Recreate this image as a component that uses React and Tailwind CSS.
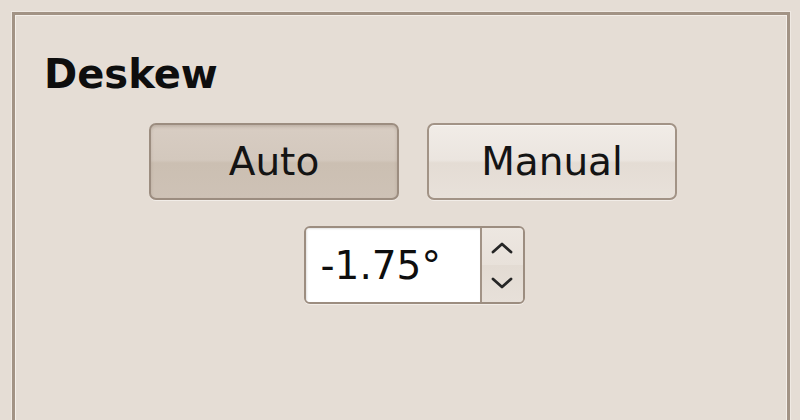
import React from "react"

function Chevron({ up }) {
 return (
  <svg width="22" height="14" viewBox="0 0 22 14" className="block">
   <polyline
    points={up ? "2,11 11,3 20,11" : "2,3 11,11 20,3"}
    fill="none"
    stroke="#262626"
    strokeWidth="2.8"
    strokeLinecap="round"
    strokeLinejoin="round"
   />
  </svg>
 )
}

function App() {
 return (
  <div
   className="w-[800px] h-[420px] bg-[#e5ddd5] overflow-hidden pt-[12px] pl-[12px] pr-[10px]"
   style={{ fontFamily: '"DejaVu Sans", Verdana, sans-serif' }}
  >
   <div className="h-[420px] border-[3px] border-b-0 border-[#a29385] shadow-[inset_1px_1px_0_#f4efea,inset_-1px_0_0_#f4efea,0_0_0_1px_#efe9e3]">
    <h1 className="pl-[29px] pt-[39px] text-[40px] leading-[40px] font-bold text-[#0e0e0e]">
     Deskew
    </h1>

    <div className="pl-[24px] flex flex-col items-center">
     <div className="mt-[29px] flex gap-[28px]">
      <button className="w-[250px] h-[77px] rounded-[7px] border-2 border-[#9c8d80] bg-[linear-gradient(#d8cdc3_0%,#d3c8bd_48%,#cbbfb2_52%,#cec2b6_100%)] shadow-[inset_0_2px_3px_rgba(120,100,85,0.25),0_1px_0_#f2ede8] text-[39px] leading-none text-[#141414]">
       Auto
      </button>
      <button className="w-[250px] h-[77px] rounded-[7px] border-2 border-[#a29386] bg-[linear-gradient(#f1ece7_0%,#ebe5df_48%,#e4dcd4_52%,#e8e1da_100%)] shadow-[inset_0_1px_0_#f8f5f2,0_1px_0_#f2ede8] text-[39px] leading-none text-[#141414]">
       Manual
      </button>
     </div>

     <div className="mt-[26px] ml-[2px] flex h-[78px] w-[221px] rounded-[6px] border-2 border-[#9c8d80] overflow-hidden shadow-[0_1px_0_#f2ede8]">
      <div className="w-[176px] bg-white flex items-center pl-[15px] text-[39px] leading-none text-[#0e0e0e] border-r-2 border-[#a29386] shadow-[inset_1px_1px_2px_rgba(0,0,0,0.12)]">
       -1.75°
      </div>
      <div className="flex-1 flex flex-col">
       <div className="flex-1 flex items-center justify-center pt-[2px] bg-[linear-gradient(#ede7e1,#e8e1da)]">
        <Chevron up />
       </div>
       <div className="flex-1 flex items-center justify-center pb-[2px] bg-[linear-gradient(#e3dbd3,#e7e0d9)]">
        <Chevron />
       </div>
      </div>
     </div>
    </div>
   </div>
  </div>
 )
}

export default App
